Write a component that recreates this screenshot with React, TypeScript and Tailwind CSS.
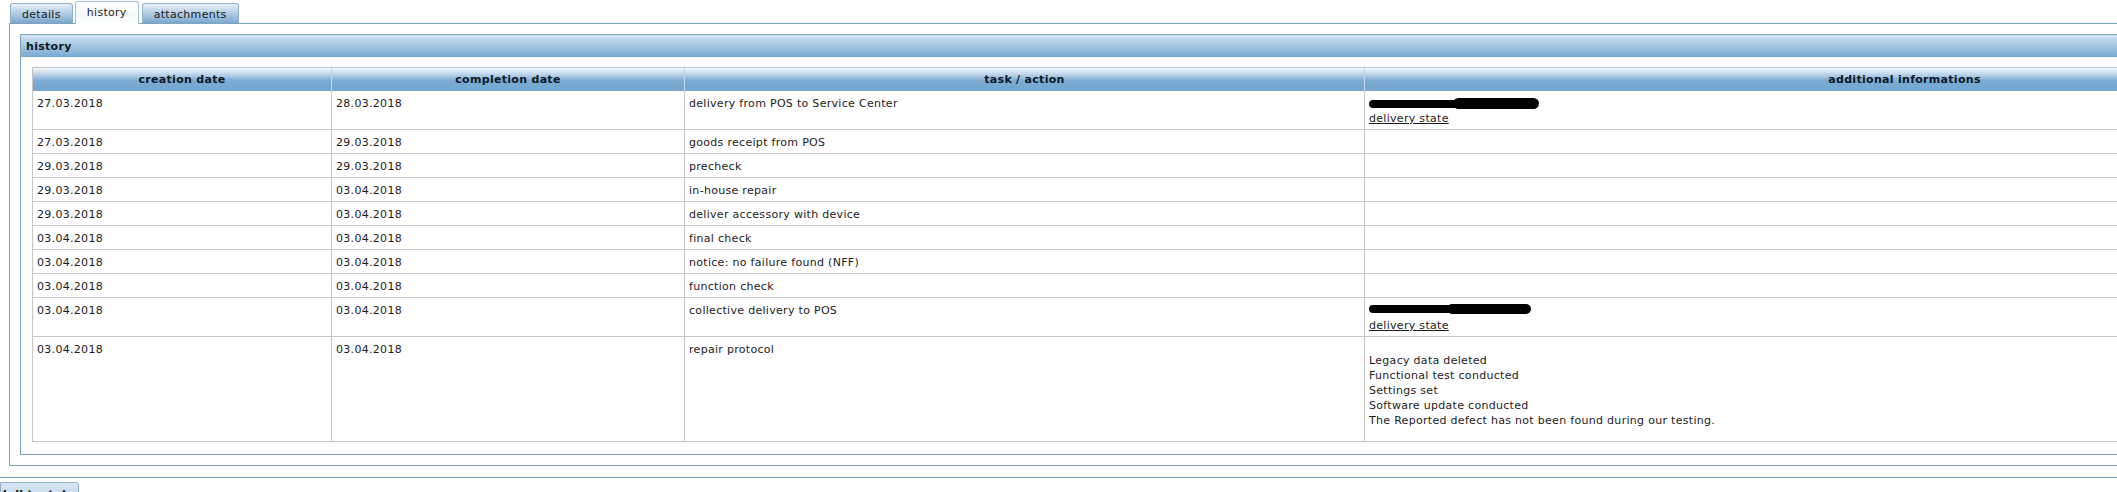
import React from "react";

type Row = {
  c: string;
  d: string;
  t: string;
  info?: "delivery1" | "delivery2" | "protocol";
};

const rows: Row[] = [
  { c: "27.03.2018", d: "28.03.2018", t: "delivery from POS to Service Center", info: "delivery1" },
  { c: "27.03.2018", d: "29.03.2018", t: "goods receipt from POS" },
  { c: "29.03.2018", d: "29.03.2018", t: "precheck" },
  { c: "29.03.2018", d: "03.04.2018", t: "in-house repair" },
  { c: "29.03.2018", d: "03.04.2018", t: "deliver accessory with device" },
  { c: "03.04.2018", d: "03.04.2018", t: "final check" },
  { c: "03.04.2018", d: "03.04.2018", t: "notice: no failure found (NFF)" },
  { c: "03.04.2018", d: "03.04.2018", t: "function check" },
  { c: "03.04.2018", d: "03.04.2018", t: "collective delivery to POS", info: "delivery2" },
  { c: "03.04.2018", d: "03.04.2018", t: "repair protocol", info: "protocol" },
];

const cell =
  "px-[4px] pt-[5px] pb-[3px] leading-[15px] border-r border-b border-[#c6c6c6] whitespace-nowrap";
const head =
  "h-[23px] flex items-center justify-center pt-[2px] font-bold text-[#0c1828] border-r border-[#c3d6e7] bg-[linear-gradient(to_bottom,#f4f8fb_0%,#bcd4ea_28%,#7cabd3_55%,#74a6cf_100%)]";

function Info({ kind }: { kind?: Row["info"] }) {
  if (kind === "delivery1") {
    return (
      <div>
        <div className="h-[15px] flex items-start">
          <div className="mt-[4px] h-[8px] w-[92px] rounded-full bg-black" />
          <div className="-ml-[8px] mt-[2px] h-[11px] w-[86px] rounded-full bg-black" />
        </div>
        <a className="underline text-[#1c1c1c]">delivery state</a>
      </div>
    );
  }
  if (kind === "delivery2") {
    return (
      <div>
        <div className="h-[15px] flex items-start">
          <div className="mt-[2px] h-[8px] w-[86px] rounded-full bg-black" />
          <div className="-ml-[8px] mt-[1px] h-[10px] w-[84px] rounded-full bg-black" />
        </div>
        <a className="underline text-[#1c1c1c]">delivery state</a>
      </div>
    );
  }
  if (kind === "protocol") {
    return (
      <div className="mt-[11px] mb-[10px]">
        <div>Legacy data deleted</div>
        <div>Functional test conducted</div>
        <div>Settings set</div>
        <div>Software update conducted</div>
        <div>The Reported defect has not been found during our testing.</div>
      </div>
    );
  }
  return <div className="h-[15px]" />;
}

export default function App() {
  return (
    <div
      className="w-[2117px] h-[492px] overflow-hidden bg-white text-[11px] tracking-[0.3px] text-[#1c1c1c]"
      style={{ fontFamily: '"DejaVu Sans", Verdana, sans-serif' }}
    >
      {/* tab strip */}
      <div className="h-[23px] flex items-end pl-[10px] relative z-10">
        <div className="h-[20px] flex items-center px-[11px] pt-[3px] border border-b-0 border-[#94b3cb] rounded-t-[3px] bg-[linear-gradient(to_bottom,#e9f0f6_0%,#bcd3e7_40%,#7aa8cf_100%)]">
          details
        </div>
        <div className="ml-[2px] -mb-[1px] h-[23px] pt-[1px] flex items-center px-[11px] border border-b-0 border-[#a3bfd4] rounded-t-[3px] bg-[linear-gradient(to_bottom,#ffffff_0%,#f6f9fc_60%,#ffffff_100%)]">
          history
        </div>
        <div className="ml-[3px] h-[20px] flex items-center px-[11px] pt-[3px] border border-b-0 border-[#94b3cb] rounded-t-[3px] bg-[linear-gradient(to_bottom,#e9f0f6_0%,#bcd3e7_40%,#7aa8cf_100%)]">
          attachments
        </div>
      </div>

      {/* outer tab panel */}
      <div className="ml-[9px] w-[2500px] border-l border-t border-b border-[#7ea3bd] p-[10px]">
        {/* history panel */}
        <div className="border-l border-t border-b border-[#7ea3bd] pl-[11px] pb-[12px]">
          <div className="-ml-[11px] h-[22px] flex items-center pl-[5px] pt-[2px] font-bold text-[#0c1828] bg-[linear-gradient(to_bottom,#d3e5f4_0%,#a9c8e3_45%,#78a8d0_100%)]">
            history
          </div>
          <div className="mt-[10px] w-max border-l border-t border-[#c6c6c6] grid grid-cols-[299px_353px_680px_1080px]">
            <div className={head}>creation date</div>
            <div className={head}>completion date</div>
            <div className={head}>task / action</div>
            <div className={head}>additional informations</div>
            {rows.map((r, i) => (
              <React.Fragment key={i}>
                <div className={cell}>{r.c}</div>
                <div className={cell}>{r.d}</div>
                <div className={cell}>{r.t}</div>
                <div className={cell}>
                  <Info kind={r.info} />
                </div>
              </React.Fragment>
            ))}
          </div>
        </div>
      </div>

      {/* lower section */}
      <div className="mt-[11px] border-t border-[#7ea3bd]" />
      <div className="mt-[4px] w-[79px] h-[20px] border border-[#8fb1cb] rounded-tr-[3px] bg-[linear-gradient(to_bottom,#d6e5f2_0%,#c3d8eb_100%)] pl-[2px] pt-[4px] font-bold text-[#111] leading-[15px] whitespace-nowrap overflow-hidden">
        bdl text d
      </div>
    </div>
  );
}
